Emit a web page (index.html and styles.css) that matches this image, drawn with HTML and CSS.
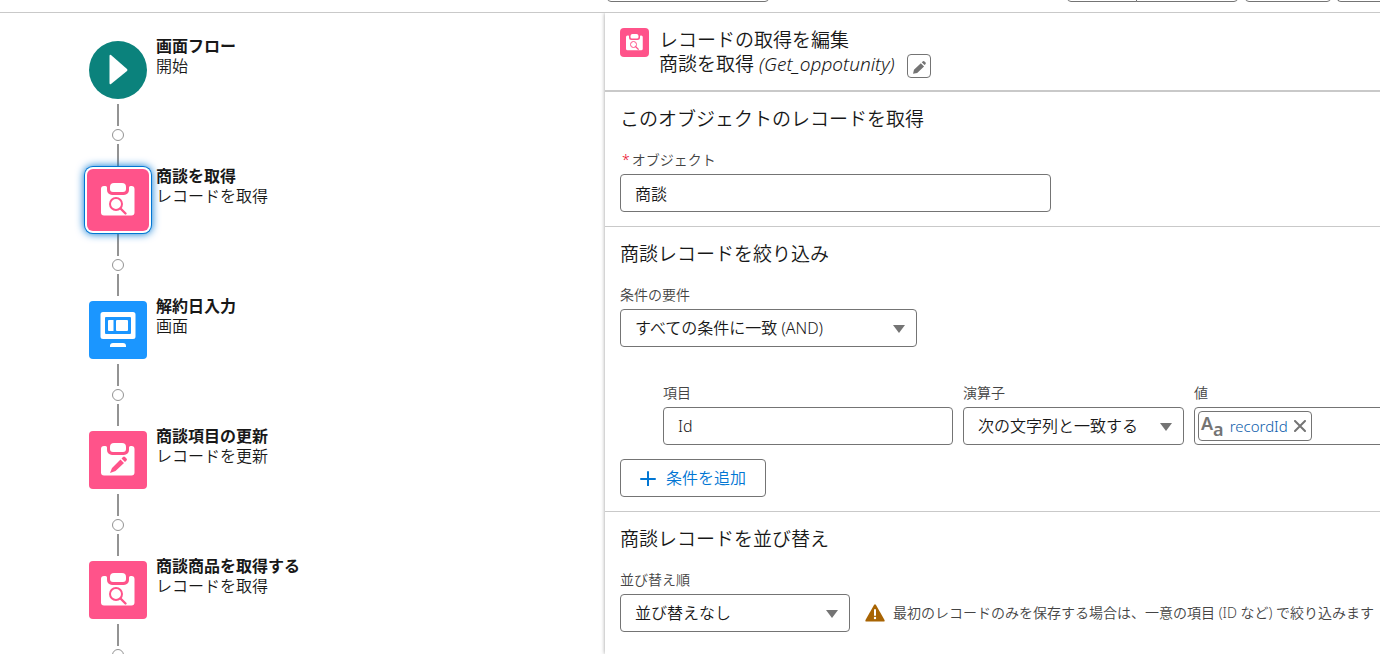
FILE: index.html
```html
<!DOCTYPE html>
<html lang="ja">
<head>
<meta charset="utf-8">
<title>画面フロー</title>
<link rel="stylesheet" href="styles.css">
</head>
<body>
<svg class="defs" aria-hidden="true">
  <symbol id="record-search" viewBox="0 0 58 58">
    <path fill="#fff" d="M15 17h1.500a1.500 1.500 0 0 1 1.500 1.500v2.500a5 5 0 0 0 5 5h12a5 5 0 0 0 5-5v-2.500a1.500 1.500 0 0 1 1.500-1.500h1a3 3 0 0 1 3 3v23.500a3 3 0 0 1-3 3h-27.500a3 3 0 0 1-3-3v-23.500a3 3 0 0 1 3-3z" transform="translate(0 -2)"/>
    <path fill="#fff" d="M25 12h8a4 4 0 0 1 4 4v2a3 3 0 0 1-3 3H24a3 3 0 0 1-3-3v-2a4 4 0 0 1 4-4z"/>
    <circle cx="27" cy="33" r="6" fill="none" stroke="#ff538a" stroke-width="2"/>
    <path d="M31.500 37.500l5 5" fill="none" stroke="#ff538a" stroke-width="2.400" stroke-linecap="round"/>
  </symbol>
  <symbol id="record-edit" viewBox="0 0 58 58">
    <path fill="#fff" d="M15 17h1.500a1.500 1.500 0 0 1 1.500 1.500v2.500a5 5 0 0 0 5 5h12a5 5 0 0 0 5-5v-2.500a1.500 1.500 0 0 1 1.500-1.500h1a3 3 0 0 1 3 3v23.500a3 3 0 0 1-3 3h-27.500a3 3 0 0 1-3-3v-23.500a3 3 0 0 1 3-3z" transform="translate(0 -2)"/>
    <path fill="#fff" d="M25 12h8a4 4 0 0 1 4 4v2a3 3 0 0 1-3 3H24a3 3 0 0 1-3-3v-2a4 4 0 0 1 4-4z"/>
    <path fill="#ff538a" d="M21 42l2-5 8.500-8.500 3.500 3.500-8.500 8zM32.500 27.500l1.500-1.500q1-1 2 0l1.500 1.500q1 1 0 2L36 31z"/>
  </symbol>
</svg>

<header class="toolbar">
  <button class="tool tool-find" aria-label="検索"></button>
  <div class="tool-group">
    <button class="tool tool-a" aria-label="実行"></button>
    <button class="tool tool-b" aria-label="デバッグ"></button>
    <button class="tool tool-c" aria-label="有効化"></button>
    <button class="tool tool-d" aria-label="保存"></button>
  </div>
</header>

<div class="workspace">
  <main class="canvas">
    <div class="node">
      <div class="node-icon start"><svg viewBox="0 0 58 58"><path fill="#fff" d="M20.500 15q0-2 1.500-1l16 14q1 1 0 2l-16 13q-1.500 1-1.500-1z"/></svg></div>
      <div class="node-text"><strong>画面フロー</strong><span>開始</span></div>
    </div>
    <div class="link"><i class="line"></i><button class="add-node" aria-label="要素を追加"></button><i class="line"></i></div>
    <div class="node">
      <div class="node-icon record selected"><svg><use href="#record-search"/></svg></div>
      <div class="node-text"><strong>商談を取得</strong><span>レコードを取得</span></div>
    </div>
    <div class="link"><i class="line"></i><button class="add-node" aria-label="要素を追加"></button><i class="line"></i></div>
    <div class="node">
      <div class="node-icon screen"><svg viewBox="0 0 58 58"><path fill="#fff" fill-rule="evenodd" d="M14 11h30a2.500 2.500 0 0 1 2.500 2.500v22a2.500 2.500 0 0 1-2.500 2.500H14a2.500 2.500 0 0 1-2.500-2.500v-22A2.500 2.500 0 0 1 14 11zM17 16q-1 0-1 1v15q0 1 1 1h24q1 0 1-1V17q0-1-1-1z"/><path fill="#fff" d="M20 19h4.500v11H20q-1 0-1-1v-9q0-1 1-1zM28 19h10q1 0 1 1v9q0 1-1 1H28q-1 0-1-1v-9q0-1 1-1zM24 42h10q3 0 3 3v1H21v-1q0-3 3-3z"/></svg></div>
      <div class="node-text"><strong>解約日入力</strong><span>画面</span></div>
    </div>
    <div class="link"><i class="line"></i><button class="add-node" aria-label="要素を追加"></button><i class="line"></i></div>
    <div class="node">
      <div class="node-icon record"><svg><use href="#record-edit"/></svg></div>
      <div class="node-text"><strong>商談項目の更新</strong><span>レコードを更新</span></div>
    </div>
    <div class="link"><i class="line"></i><button class="add-node" aria-label="要素を追加"></button><i class="line"></i></div>
    <div class="node">
      <div class="node-icon record"><svg><use href="#record-search"/></svg></div>
      <div class="node-text"><strong>商談商品を取得する</strong><span>レコードを取得</span></div>
    </div>
    <div class="link"><i class="line"></i><button class="add-node" aria-label="要素を追加"></button><i class="line"></i></div>
  </main>

  <aside class="panel">
    <div class="panel-head">
      <div class="panel-icon"><svg><use href="#record-search"/></svg></div>
      <div>
        <h1>レコードの取得を編集</h1>
        <div class="subtitle">
          <span>商談を取得 <em>(Get_oppotunity)</em></span>
          <button class="edit" aria-label="編集"><svg viewBox="0 0 24 24"><path fill="#747474" d="M5.500 20.500l1-4.500 7.500-7 3.500 3.500-7.500 7zM15 8l1-1q1-1 2 0l1 1q1 1 0 2l-1 1z"/></svg></button>
        </div>
      </div>
    </div>

    <section class="section">
      <h2>このオブジェクトのレコードを取得</h2>
      <label class="label" for="object"><span class="required">*</span>オブジェクト</label>
      <input class="control object" id="object" type="text" value="商談">
    </section>

    <section class="section">
      <h2>商談レコードを絞り込み</h2>
      <label class="label" for="logic">条件の要件</label>
      <div class="select logic"><select class="control" id="logic"><option>すべての条件に一致 (AND)</option></select></div>
      <div class="condition">
        <div>
          <label class="label" for="field">項目</label>
          <input class="control" id="field" type="text" value="Id">
        </div>
        <div>
          <label class="label" for="operator">演算子</label>
          <div class="select"><select class="control" id="operator"><option>次の文字列と一致する</option></select></div>
        </div>
        <div>
          <span class="label">値</span>
          <div class="control value">
            <span class="pill">
              <span class="type-icon" aria-hidden="true"><b>A</b><b class="small">a</b></span>
              <a href="#">recordId</a>
              <button class="remove" aria-label="削除"><svg viewBox="0 0 12 12"><path d="M1 1l10 10M11 1L1 11" stroke="#747474" stroke-width="2" stroke-linecap="round"/></svg></button>
            </span>
          </div>
        </div>
      </div>
      <button class="add-condition"><svg viewBox="0 0 16 16"><path d="M8 2v14M1 9h14" stroke="#0176d3" stroke-width="2" stroke-linecap="round"/></svg>条件を追加</button>
    </section>

    <section class="section">
      <h2>商談レコードを並び替え</h2>
      <label class="label" for="sort">並び替え順</label>
      <div class="sort-row">
        <div class="select sort"><select class="control" id="sort"><option>並び替えなし</option></select></div>
        <p class="warning"><svg viewBox="0 0 20 18"><path fill="#a86403" d="M9 1q1-1.500 2 0l8.500 15q.5 1.500-1 1.500h-17q-1.500 0-1-1.500z"/><path d="M10 6v5" stroke="#fff" stroke-width="2" stroke-linecap="round"/><circle cx="10" cy="14" r="1.200" fill="#fff"/></svg>最初のレコードのみを保存する場合は、一意の項目 (ID など) で絞り込みます</p>
      </div>
    </section>
  </aside>
</div>
</body>
</html>
```
FILE: styles.css
```css
* {
  box-sizing: border-box;
}

body {
  margin: 0;
  height: 100vh;
  display: flex;
  flex-direction: column;
  overflow: hidden;
  background: #fff;
  color: #181818;
  font: 350 16px/20px "Noto Sans", "Noto Sans CJK JP", sans-serif;
}

button,
input,
select {
  font: inherit;
  color: inherit;
}

button {
  padding: 0;
  border: 1px solid #747474;
  border-radius: 4px;
  background: #fff;
}

h1,
h2,
p {
  margin: 0;
}

svg {
  display: block;
}

.defs {
  position: absolute;
  width: 0;
  height: 0;
}

/* Toolbar */

.toolbar {
  display: flex;
  flex: none;
  align-items: flex-end;
  justify-content: space-between;
  height: 13px;
  padding: 0 0 10px 44%;
  border-bottom: 1px solid #c9c9c9;
}

.tool {
  height: 32px;
}

.tool-find {
  width: 162px;
}

.tool-group {
  display: flex;
}

.tool-a {
  width: 70px;
  border-radius: 4px 0 0 4px;
}

.tool-b {
  width: 102px;
  margin-left: -1px;
  border-radius: 0 4px 4px 0;
}

.tool-c {
  width: 86px;
  margin-left: 7px;
}

.tool-d {
  width: 43px;
  margin-left: 6px;
  border-right: 0;
  border-radius: 4px 0 0 4px;
}

.workspace {
  display: grid;
  flex: 1;
  grid-template-columns: minmax(0, 605fr) minmax(0, 775fr);
  min-height: 0;
}

/* Flow canvas */

.canvas {
  padding: 28px 0 0 89px;
  overflow: hidden;
}

.node {
  display: flex;
  gap: 9px;
  height: 58px;
}

.node-icon {
  width: 58px;
  height: 58px;
  border-radius: 4px;
}

.node-icon svg {
  width: 58px;
  height: 58px;
}

.start {
  border-radius: 50%;
  background: #0b827c;
}

.record {
  background: #ff538a;
}

.screen {
  background: #1b96ff;
}

.selected {
  position: relative;
  box-shadow: 0 0 0 2px #ff538a, 0 0 0 4px #fff, 0 0 0 5px #0176d3, 0 0 8px 5px #0176d3;
}

.node-text {
  display: flex;
  flex-direction: column;
  margin-top: -5px;
}

.node-text strong {
  font-weight: 700;
}

.link {
  display: flex;
  flex-direction: column;
  align-items: center;
  gap: 3px;
  width: 58px;
  height: 72px;
  padding-top: 5px;
}

.line {
  width: 2px;
  height: 22px;
  background: #939393;
}

.add-node {
  width: 12px;
  height: 12px;
  border-color: #939393;
  border-radius: 50%;
}

/* Properties panel */

.panel {
  overflow: hidden;
  background: #fff;
  box-shadow: 0 0 4px #999;
  clip-path: inset(0 0 0 -6px);
}

.panel-head {
  display: flex;
  gap: 10px;
  padding: 15px 15px 12px;
  border-bottom: 2px solid #c9c9c9;
}

.panel-icon {
  width: 29px;
  height: 29px;
  border-radius: 4px;
  background: #ff538a;
}

.panel-icon svg {
  width: 29px;
  height: 29px;
}

h1,
h2,
.subtitle {
  font-size: 19px;
  font-weight: 350;
  line-height: 24px;
}

.subtitle {
  display: flex;
  gap: 12px;
  height: 26px;
}

.edit {
  align-self: flex-end;
  width: 24px;
  height: 24px;
}

.edit svg {
  width: 22px;
  height: 22px;
}

.section {
  padding: 15px 15px 14px;
  border-bottom: 1px solid #c9c9c9;
}

.section:last-child {
  border-bottom: 0;
}

h2 {
  margin-bottom: 19px;
}

.label {
  display: block;
  margin-bottom: 4px;
  color: #444;
  font-size: 14px;
}

.required {
  margin: 0 2px;
  color: #ea001e;
}

.control {
  display: block;
  width: 100%;
  height: 38px;
  padding: 0 14px;
  border: 1px solid #747474;
  border-radius: 4px;
  background: #fff;
  appearance: none;
}

.object {
  width: 431px;
}

.select {
  position: relative;
}

.select::after {
  content: "";
  position: absolute;
  top: 16px;
  right: 12px;
  border: 6px solid transparent;
  border-top: 8px solid #747474;
  border-bottom: 0;
  pointer-events: none;
}

.logic {
  width: 297px;
}

.condition {
  display: grid;
  grid-template-columns: 290px 221px minmax(240px, 1fr);
  gap: 10px;
  margin: 36px 0 14px;
  padding-left: 43px;
}

.value {
  padding: 3px;
}

.pill {
  display: inline-flex;
  align-items: center;
  gap: 6px;
  height: 30px;
  padding: 0 5px 0 2px;
  border: 1px solid #747474;
  border-radius: 4px;
}

.pill a {
  color: #0b5cab;
  font-size: 15px;
  text-decoration: none;
}

.type-icon {
  display: flex;
  color: #747474;
  font-size: 18px;
}

.type-icon b {
  font-weight: 600;
}

.type-icon .small {
  padding-top: 6px;
}

.remove {
  border: 0;
}

.remove svg {
  width: 12px;
  height: 12px;
}

.add-condition {
  display: flex;
  align-items: center;
  gap: 10px;
  height: 38px;
  padding: 0 19px;
  color: #0176d3;
}

.add-condition svg {
  width: 16px;
  height: 16px;
}

.sort-row {
  display: flex;
  align-items: center;
  gap: 15px;
}

.sort {
  flex: none;
  width: 230px;
}

.warning {
  display: flex;
  align-items: center;
  gap: 8px;
  color: #444;
  font-size: 14px;
  white-space: nowrap;
}

.warning svg {
  flex: none;
  width: 20px;
  height: 18px;
}
```
